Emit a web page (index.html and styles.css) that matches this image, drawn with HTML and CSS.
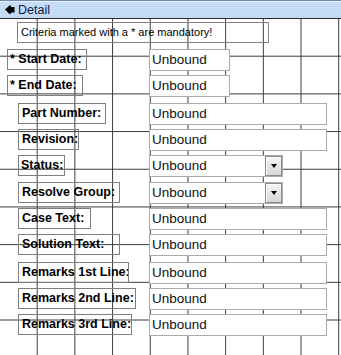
FILE: index.html
```html
<!DOCTYPE html>
<html>
<head>
    <meta charset="utf-8">
    <title>Detail</title>
    <link rel="stylesheet" href="styles.css">
</head>
<body>
<div class="section-bar">
    <svg class="section-icon" width="10" height="10" viewBox="0 0 10 10">
        <path d="M0 4.5 L4.5 0.5 H6 V2 H9.5 V7.5 H6 V8.5 L4.5 9 Z" fill="#000"/>
    </svg>
    <span>Detail</span>
</div>
<div class="detail">
    <div class="note">Criteria marked with a * are mandatory!</div>
    <div class="fields">
        <div class="field">
            <div class="cap"><span class="label req lbl-start">* Start Date:</span></div>
            <div class="textbox short">Unbound</div>
        </div>
        <div class="field">
            <div class="cap"><span class="label req lbl-end">* End Date:</span></div>
            <div class="textbox short">Unbound</div>
        </div>
        <div class="field spaced">
            <div class="cap"><span class="label lbl-part">Part Number:</span></div>
            <div class="textbox long">Unbound</div>
        </div>
        <div class="field">
            <div class="cap"><span class="label lbl-rev">Revision:</span></div>
            <div class="textbox long">Unbound</div>
        </div>
        <div class="field">
            <div class="cap"><span class="label lbl-status">Status:</span></div>
            <div class="textbox combo">Unbound<i class="drop"></i></div>
        </div>
        <div class="field nudged">
            <div class="cap"><span class="label lbl-group">Resolve Group:</span></div>
            <div class="textbox combo">Unbound<i class="drop"></i></div>
        </div>
        <div class="field">
            <div class="cap"><span class="label lbl-case">Case Text:</span></div>
            <div class="textbox long">Unbound</div>
        </div>
        <div class="field">
            <div class="cap"><span class="label lbl-solution">Solution Text:</span></div>
            <div class="textbox long">Unbound</div>
        </div>
        <div class="field spaced">
            <div class="cap"><span class="label lbl-rem1">Remarks 1st Line:</span></div>
            <div class="textbox long">Unbound</div>
        </div>
        <div class="field">
            <div class="cap"><span class="label lbl-rem2">Remarks 2nd Line:</span></div>
            <div class="textbox long">Unbound</div>
        </div>
        <div class="field">
            <div class="cap"><span class="label lbl-rem3">Remarks 3rd Line:</span></div>
            <div class="textbox long">Unbound</div>
        </div>
    </div>
</div>
</body>
</html>
```
FILE: styles.css
```css
html, body {
    margin: 0;
    padding: 0;
    background: #fff;
}

body {
    width: 341px;
    height: 355px;
    overflow: hidden;
    font-family: "Liberation Sans", Arial, sans-serif;
    color: #000;
}

/* section header */
.section-bar {
    box-sizing: border-box;
    height: 19px;
    border-top: 1px solid #6f89b0;
    border-bottom: 1px solid #2c2c2c;
    background: linear-gradient(#eaf2fc 0, #eaf2fc 1px, #c6dcf7 1px, #c3daf6 100%);
    display: flex;
    align-items: center;
    padding-left: 5px;
    font-size: 12.5px;
    color: #10203a;
}

.section-icon {
    display: block;
    margin-right: 3px;
}

/* design grid */
.detail {
    height: 336px;
    padding-top: 3px;
    box-sizing: border-box;
    background-image:
        linear-gradient(to right, transparent calc(100% - 1px), #3a3a3a 0),
        linear-gradient(to bottom, transparent calc(100% - 1px), #3a3a3a 0);
    background-size: 37.7px 37.7px;
}

.note {
    box-sizing: border-box;
    width: 252px;
    height: 21px;
    margin-left: 17px;
    border: 1px solid #828282;
    padding-left: 3px;
    font-size: 11px;
    line-height: 19px;
}

.fields {
    display: flex;
    flex-direction: column;
    gap: 4px;
    margin-top: 6px;
}

.field {
    display: flex;
    height: 22px;
}

.field.spaced {
    margin-top: 2px;
}

.field.nudged {
    margin-top: 1px;
}

.cap {
    width: 149px;
    flex: none;
}

.label {
    display: block;
    box-sizing: border-box;
    height: 21px;
    margin-left: 18px;
    border: 1px solid #7e7e7e;
    padding-left: 3px;
    font-size: 12.5px;
    font-weight: bold;
    line-height: 19px;
    white-space: nowrap;
    overflow: hidden;
}

.label.req {
    margin-left: 7px;
    padding-left: 2px;
}

.lbl-start { width: 80px; }
.lbl-end { width: 76px; }
.lbl-part { width: 88px; }
.lbl-rev { width: 61px; }
.lbl-status { width: 47px; padding-left: 2px; }
.lbl-group { width: 102px; }
.lbl-case { width: 73px; }
.lbl-solution { width: 102px; }
.lbl-rem1 { width: 111px; }
.lbl-rem2 { width: 118px; }
.lbl-rem3 { width: 114px; }

.textbox {
    box-sizing: border-box;
    height: 22px;
    border: 1px solid #ababab;
    background: #fff;
    padding-left: 2px;
    font-size: 13.5px;
    line-height: 20px;
    color: #111;
}

.textbox.short { width: 81px; }
.textbox.long { width: 178px; }

.textbox.combo {
    width: 134px;
    display: flex;
    justify-content: space-between;
}

.drop {
    box-sizing: border-box;
    width: 17px;
    height: 20px;
    border: 1px solid #8c8c8c;
    box-shadow: inset 1px 1px 0 #fff;
    background: linear-gradient(#f6f6f6, #d6d6d6);
    display: flex;
    align-items: center;
    justify-content: center;
}

.drop::after {
    content: "";
    border-left: 3px solid transparent;
    border-right: 3px solid transparent;
    border-top: 4px solid #000;
}
```
